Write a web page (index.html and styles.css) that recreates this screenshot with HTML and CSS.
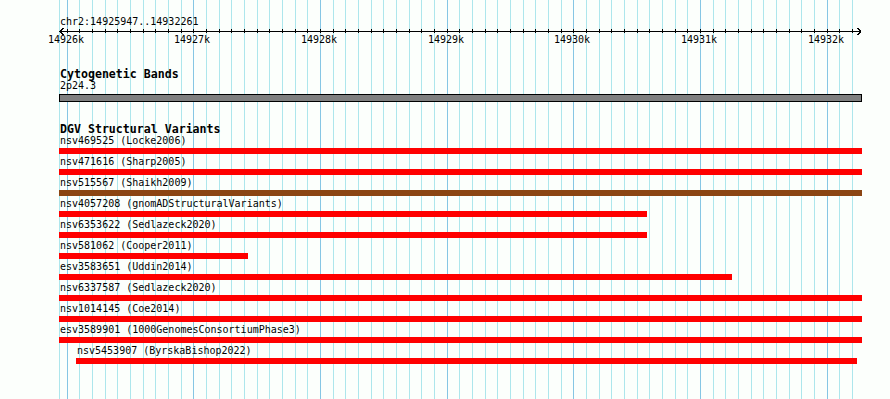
FILE: index.html
```html
<!DOCTYPE html>
<html lang="en">
  <head>
    <meta charset="UTF-8" />
    <title>chr2:14925947..14932261</title>
    <link rel="stylesheet" href="styles.css">
  </head>
  <body>
    <svg class="grid" id="grid" width="890" height="399"></svg>

    <div class="view">
      <div class="locus">chr2:14925947..14932261</div>
      <div class="ruler" id="ruler"></div>

      <div class="track">
        <h3 class="track-title">Cytogenetic Bands</h3>
        <div class="feature">
          <div class="feature-label">2p24.3</div>
          <div class="band"></div>
        </div>
      </div>

      <div class="track">
        <h3 class="track-title">DGV Structural Variants</h3>
        <div class="feature">
          <div class="feature-label">nsv469525 (Locke2006)</div>
          <div class="bar"></div>
        </div>
        <div class="feature">
          <div class="feature-label">nsv471616 (Sharp2005)</div>
          <div class="bar"></div>
        </div>
        <div class="feature">
          <div class="feature-label">nsv515567 (Shaikh2009)</div>
          <div class="bar brown"></div>
        </div>
        <div class="feature">
          <div class="feature-label">nsv4057208 (gnomADStructuralVariants)</div>
          <div class="bar" style="width: 588px"></div>
        </div>
        <div class="feature">
          <div class="feature-label">nsv6353622 (Sedlazeck2020)</div>
          <div class="bar" style="width: 588px"></div>
        </div>
        <div class="feature">
          <div class="feature-label">nsv581062 (Cooper2011)</div>
          <div class="bar" style="width: 189px"></div>
        </div>
        <div class="feature">
          <div class="feature-label">esv3583651 (Uddin2014)</div>
          <div class="bar" style="width: 673px"></div>
        </div>
        <div class="feature">
          <div class="feature-label">nsv6337587 (Sedlazeck2020)</div>
          <div class="bar"></div>
        </div>
        <div class="feature">
          <div class="feature-label">nsv1014145 (Coe2014)</div>
          <div class="bar"></div>
        </div>
        <div class="feature">
          <div class="feature-label">esv3589901 (1000GenomesConsortiumPhase3)</div>
          <div class="bar"></div>
        </div>
        <div class="feature" style="margin-left: 17px">
          <div class="feature-label">nsv5453907 (ByrskaBishop2022)</div>
          <div class="bar" style="width: 781px"></div>
        </div>
      </div>
    </div>

    <script>
      const ns = "http://www.w3.org/2000/svg";
      const svg = document.getElementById("grid");
      const ruler = document.getElementById("ruler");

      function line(x1, y1, x2, y2, cls) {
        const l = document.createElementNS(ns, "line");
        l.setAttribute("x1", x1);
        l.setAttribute("y1", y1);
        l.setAttribute("x2", x2);
        l.setAttribute("y2", y2);
        l.setAttribute("class", cls);
        svg.appendChild(l);
      }

      // left edge of the view
      line(59.5, 0, 59.5, 399, "minor");

      // one line per 100bp, darker every 1kb
      const ticks = [];
      for (let k = 0; k <= 62; k++) {
        const x = Math.floor(67 + 12.667 * k) + 0.5;
        ticks.push(x);
        line(x, 0, x, 399, k % 10 === 0 ? "major" : "minor");
      }

      // ruler axis, ticks and arrow heads
      line(59, 31.5, 861, 31.5, "axis");
      ticks.forEach((x) => line(x, 29, x, 33, "axis"));
      line(60, 31.5, 63.5, 28, "axis");
      line(60, 31.5, 63.5, 35, "axis");
      line(861, 31.5, 857.5, 28, "axis");
      line(861, 31.5, 857.5, 35, "axis");

      for (let k = 0; k <= 60; k += 10) {
        const span = document.createElement("span");
        span.className = "ruler-label";
        span.textContent = `${14926 + k / 10}k`;
        span.style.left = `${Math.floor(67 + 12.667 * k) - 59 - 19}px`;
        ruler.appendChild(span);
      }
    </script>
  </body>
</html>
```

FILE: styles.css
```css
body {
  margin: 0;
  background: #fcfffc;
  font-family: "DejaVu Sans Mono", monospace;
  font-size: 10px;
  color: #000;
  overflow: hidden;
}

.grid {
  position: absolute;
  top: 0;
  left: 0;
  shape-rendering: crispEdges;
}

.grid .minor {
  stroke: #ade6ec;
  stroke-width: 1;
}

.grid .major {
  stroke: #86c6e4;
  stroke-width: 1;
}

.grid .axis {
  stroke: #000;
  stroke-width: 1;
}

.view {
  position: relative;
  padding: 16px 0 0 59px;
  width: 803px;
}

.locus {
  padding-left: 1px;
  line-height: 12px;
}

.ruler {
  position: relative;
  height: 19px;
}

.ruler-label {
  position: absolute;
  top: 6px;
  line-height: 12px;
  white-space: nowrap;
}

.track {
  margin-top: 21px;
}

.track-title {
  margin: 0;
  padding-left: 1px;
  font-size: 11.6px;
  font-weight: bold;
  line-height: 12px;
}

.feature-label {
  padding-left: 1px;
  line-height: 12px;
  white-space: nowrap;
}

.band {
  margin-top: 2px;
  height: 8px;
  box-sizing: border-box;
  border: 1px solid #000;
  background: #808080;
}

.bar {
  margin: 1px 0 2px;
  height: 6px;
  background: #f00;
}

.bar.brown {
  background: #8b4513;
}
```
